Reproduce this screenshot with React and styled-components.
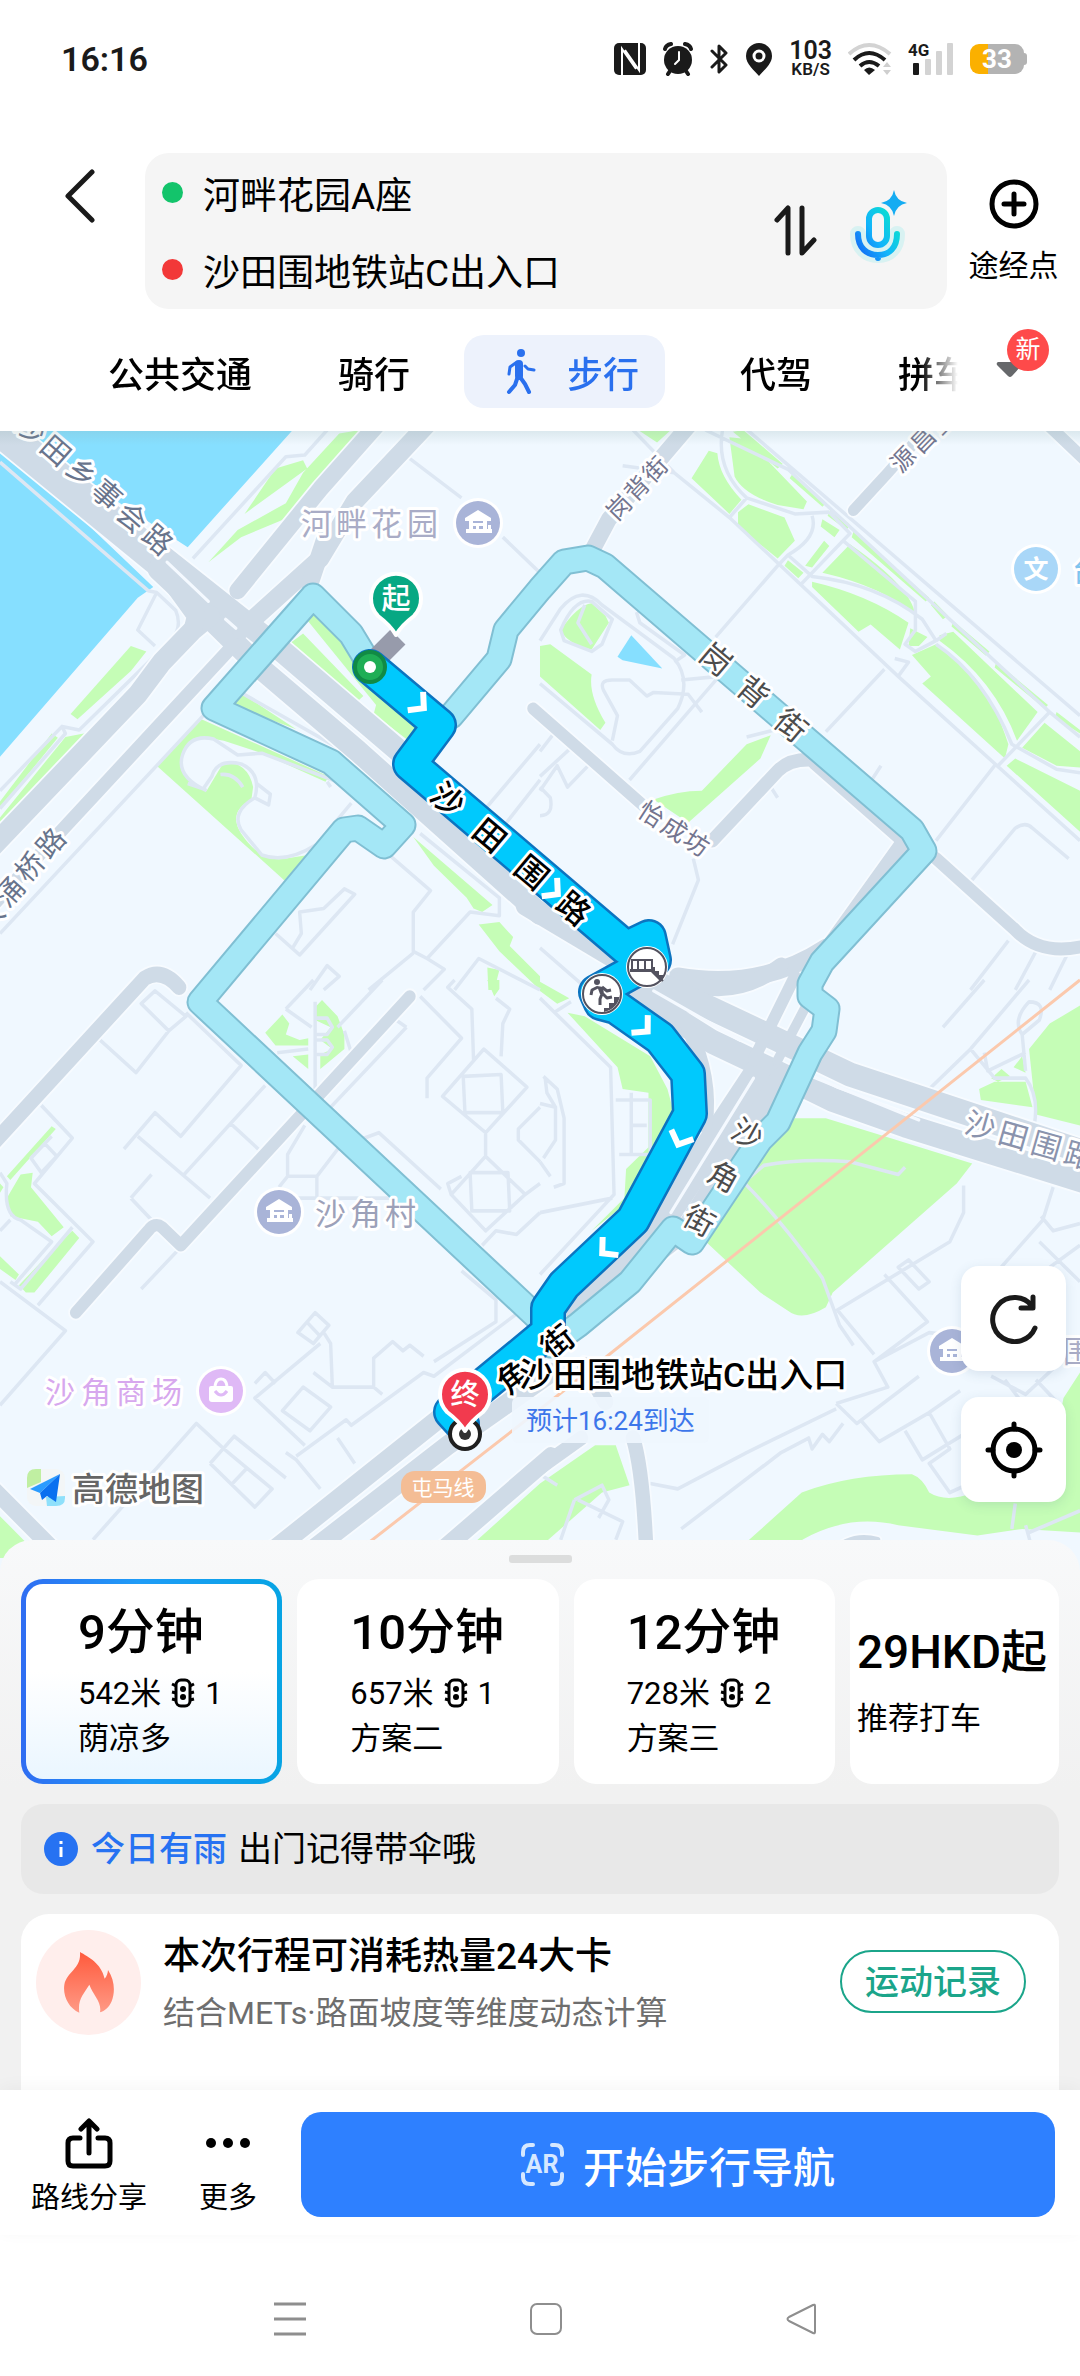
import React, { useState } from 'react';
import styled, { createGlobalStyle, css } from 'styled-components';

const GlobalStyle = createGlobalStyle`
  * {
    box-sizing: border-box;
  }

  body {
    margin: 0;
    background: #fff;
    color: #000;
    font-family: Roboto, "Noto Sans CJK SC", sans-serif;
  }

  button, input {
    margin: 0;
    padding: 0;
    border: 0;
    background: none;
    color: inherit;
    font: inherit;
  }
`

const Page = styled.div`
  display: flex;
  flex-direction: column;
  min-height: 100vh;
  overflow: hidden;
`

/* ---------- status bar ---------- */

const StatusBar = styled.div`
  display: flex;
  align-items: center;
  justify-content: space-between;
  height: 118px;
  padding: 0 53px 0 61px;
  color: #1a1a1a;
`

const Clock = styled.time`
  font-size: 34px;
  font-weight: 600;
`

const StatusIcons = styled.div`
  display: flex;
  align-items: center;
  gap: 16px;

  svg {
    display: block;
  }
`

const Speed = styled.div`
  font-size: 17px;
  font-weight: 600;
  line-height: 16px;
  text-align: center;

  strong {
    display: block;
    font-size: 25px;
    font-weight: 600;
    line-height: 20px;
  }
`

const Battery = styled.div`
  display: flex;
  align-items: center;

  span {
    width: 54px;
    border-radius: 9px;
    background: linear-gradient(90deg, #fbb000 34%, #b3b3b3 34%);
    color: #fff;
    font-size: 26px;
    font-weight: 700;
    line-height: 30px;
    text-align: center;
  }

  &::after {
    content: "";
    width: 3px;
    height: 12px;
    border-radius: 0 3px 3px 0;
    background: #b3b3b3;
  }
`

/* ---------- search header ---------- */

const SearchRow = styled.header`
  display: flex;
  align-items: center;
  padding-top: 35px;
`

const BackButton = styled.button`
  align-self: flex-start;
  width: 145px;
  padding: 16px 0 0 64px;
  text-align: left;
`

const Places = styled.div`
  display: flex;
  align-items: center;
  flex: 1;
  min-width: 0;
  height: 156px;
  padding: 0 40px 0 17px;
  border-radius: 24px;
  background: #f5f5f5;
`

const Fields = styled.div`
  display: flex;
  flex-direction: column;
  flex: 1;
  gap: 29px;
  min-width: 0;
`

const Field = styled.label`
  display: flex;
  align-items: center;
  gap: 20px;

  &::before {
    content: "";
    flex: none;
    width: 21px;
    height: 21px;
    border-radius: 50%;
    background: ${props => props.$color};
  }

  input {
    flex: 1;
    min-width: 0;
    height: 48px;
    outline: none;
    font-size: 37px;
  }
`

const IconButton = styled.button`
  margin-left: ${props => props.$gap || 0}px;

  svg {
    display: block;
  }
`

const AddStop = styled.button`
  display: flex;
  flex-direction: column;
  align-items: center;
  width: 133px;
  gap: 15px;
  padding-top: 4px;
  font-size: 30px;
  line-height: 44px;
`

/* ---------- travel modes ---------- */

const ModeRow = styled.nav`
  display: flex;
  align-items: center;
  height: 122px;
  padding-top: 3px;
`

const Modes = styled.div`
  display: flex;
  align-items: center;
  flex: 1;
  min-width: 0;
  padding-left: 65px;
  overflow: hidden;
  mask-image: linear-gradient(90deg, #000 96%, transparent);
`

const Mode = styled.button`
  flex: none;
  display: flex;
  align-items: center;
  gap: 30px;
  height: 73px;
  padding: 0 43px;
  font-size: 36px;
  font-weight: 500;

  ${props => props.$active && css`
    margin: 0 32px 0 11px;
    padding: 0 26px 0 42px;
    border-radius: 20px;
    background: #edf2fc;
    color: #2a70ee;
  `}
`

const MoreModes = styled.button`
  position: relative;
  width: 122px;
  height: 73px;
  padding-left: 38px;
  text-align: left;
`

const NewBadge = styled.span`
  position: absolute;
  top: -6px;
  left: 49px;
  width: 42px;
  border-radius: 50%;
  background: #fe4a4a;
  color: #fff;
  font-size: 25px;
  line-height: 42px;
  text-align: center;
`

/* ---------- map ---------- */

const MapArea = styled.main`
  position: relative;

  > svg {
    display: block;
    width: 100%;
    height: auto;
  }
`

const MapTools = styled.div`
  position: absolute;
  right: 14px;
  bottom: 69px;
  display: flex;
  flex-direction: column;
  gap: 26px;
`

const MapTool = styled.button`
  display: grid;
  place-items: center;
  width: 105px;
  height: 105px;
  border-radius: 18px;
  background: #fff;
  box-shadow: 0 3px 12px rgba(60, 90, 130, .14);
`

const MapText = styled.text`
  font-size: ${props => props.$size}px;
  font-weight: ${props => props.$weight || 400};
  fill: ${props => props.$color};
  stroke: ${props => (props.$plain ? 'none' : '#fff')};
  stroke-width: 6px;
  stroke-linejoin: round;
  paint-order: stroke;
`

/* ---------- bottom sheet ---------- */

const Sheet = styled.section`
  position: relative;
  display: flex;
  flex-direction: column;
  flex: 1;
  margin-top: -31px;
  padding: 15px 21px 0;
  border-radius: 32px 32px 0 0;
  background: linear-gradient(#f8f9fa, #f1f1f1 45%);
`

const Handle = styled.div`
  align-self: center;
  width: 63px;
  height: 8px;
  border-radius: 3px;
  background: #dcdddd;
`

const Plans = styled.div`
  display: grid;
  grid-template-columns: 5fr 5fr 5fr 4fr;
  gap: 15px;
  margin-top: 16px;
`

const Plan = styled.button`
  display: flex;
  flex-direction: column;
  justify-content: center;
  min-width: 0;
  height: 205px;
  padding-left: ${props => (props.$taxi ? 2 : 48)}px;
  border: 5px solid transparent;
  border-radius: 22px;
  background: #fff;
  font-size: 31px;
  line-height: 45px;
  text-align: left;
  white-space: nowrap;

  strong {
    margin-bottom: ${props => (props.$taxi ? 14 : 8)}px;
    font-size: ${props => (props.$taxi ? 46 : 49)}px;
    font-weight: 500;
    line-height: 60px;
  }

  ${props => props.$active && css`
    padding-left: 52px;
    background:
      linear-gradient(#fff 45%, #eaf6ff) padding-box,
      linear-gradient(90deg, #2f6df2, #1f9cf7 45%, #07a4e4) border-box;
  `}
`

const PlanMeta = styled.span`
  display: flex;
  align-items: center;
  gap: 10px;
`

const Notice = styled.p`
  display: flex;
  align-items: center;
  margin: 20px 0;
  min-height: 90px;
  padding: 0 23px;
  border-radius: 22px;
  background: #e8e8e8;
  font-size: 34px;
  line-height: 48px;

  b {
    margin: 0 11px 0 13px;
    color: #2672f2;
    font-weight: 500;
  }
`

const Calories = styled.article`
  display: flex;
  align-items: flex-start;
  flex: 1;
  min-height: 176px;
  padding: 16px 33px 0 15px;
  border-radius: 28px 28px 0 0;
  background: #fff;
`

const FlameBadge = styled.div`
  display: grid;
  place-items: center;
  flex: none;
  width: 105px;
  height: 105px;
  border-radius: 50%;
  background: #ffeeec;
`

const CaloriesText = styled.div`
  flex: 1;
  min-width: 0;
  padding-left: 22px;

  h2 {
    margin: 0;
    font-size: 37px;
    font-weight: 500;
    line-height: 54px;
  }

  p {
    margin: 5px 0 0;
    color: #6e6e6e;
    font-size: 32px;
    line-height: 48px;
  }
`

const RecordButton = styled.button`
  height: 63px;
  margin-top: 20px;
  padding: 0 23px;
  border: 2px solid #1ba58a;
  border-radius: 32px;
  color: #1ba58a;
  font-size: 34px;
  font-weight: 500;
  line-height: 56px;
`

/* ---------- bottom bars ---------- */

const ActionBar = styled.footer`
  position: relative;
  display: flex;
  align-items: flex-start;
  padding: 22px 25px 16px 31px;
  background: #fff;
  box-shadow: 0 -3px 16px rgba(0, 0, 0, .04);
`

const Action = styled.button`
  display: flex;
  flex-direction: column;
  align-items: center;
  gap: 7px;
  margin-right: ${props => props.$gap}px;
  padding-top: 6px;
  font-size: 29px;
  line-height: 42px;
`

const StartButton = styled.button`
  display: flex;
  align-items: center;
  justify-content: center;
  flex: 1;
  gap: 19px;
  height: 105px;
  border-radius: 20px;
  background: #2e80ff;
  color: #fff;
  font-size: 42px;
  font-weight: 500;
`

const SystemNav = styled.div`
  display: flex;
  justify-content: space-between;
  padding: 66px 260px 39px 272px;
  background: #fff;

  svg {
    display: block;
  }
`

// The base map is cut in four tiles, each one drawn on a 1568 x 1568 grid
const TILES = [
  {
    transform: 'translate(0 430) scale(.3444 .3571)',
    water: 'M20 0H850L545 328ZM0 30L445 440L400 470L0 915Z',
    green: [
      'M710 235L800 108L880 85L892 108Z',
      'M605 370L690 280L830 205L880 120L985 10L1045 0L870 200L825 250L700 300Z',
      'M205 795L380 605L425 620L380 675L225 810Z',
      'M0 1040L150 850L168 862L0 1060Z',
      'M0 1130V1085L190 860L270 845L375 732L340 790L200 920Z',
      'M890 530L915 512L980 565L1060 700L1215 830L1180 865L1085 795L1092 770Z',
      'M845 595L880 570L1055 745L1040 758Z',
      'M670 770L705 740L860 838Z',
      'M585 810L955 970L945 985L760 905L650 870Q560 850 530 900Q500 970 600 1010L650 930Q720 930 735 1000L730 1035Q660 1070 700 1130Q760 1215 830 1200L895 1190L830 1265L455 940Z',
      'M1200 1140L1375 1285L1430 1330L1400 1350L1375 1340L1355 1310L1260 1220Z',
      'M1390 1385L1450 1378L1490 1420L1480 1445L1568 1530V1568L1450 1460Z',
      'M1415 1505L1450 1512L1435 1568H1418Z',
    ],
    thin: [
      'M1190 80L1340 190M1460 300L1568 400',
      'M560 360L830 75L885 70L950 0',
      'M0 1410L600 790',
      'M0 90L430 450L455 455L510 505Q530 550 500 585L230 840L180 830L0 1010M455 455L400 560L450 605M180 830L190 850L0 1060',
      'M600 1010Q510 970 530 910Q550 850 620 865L690 910L760 905L1020 1000L1200 1110M1020 1045L920 1160Q830 1215 760 1190L700 1120Q670 1070 740 1030Q760 960 700 935Q630 920 615 970L590 1005L545 990M740 1030L780 1050L785 1020L745 990M640 965Q680 960 705 1000',
      'M950 985L960 1000M690 730L1000 900',
      'M1130 1190L1250 1290L1200 1350V1460L1240 1480L1365 1350L1450 1360V1310L1220 1130',
      'M800 1410L870 1470L1030 1300L1000 1285L940 1340L870 1350L875 1410L850 1450',
      'M900 1568L950 1500L985 1530L940 1568M1070 1568L1200 1465M1240 1480L1290 1510L1230 1568M1320 1568L1390 1480L1568 1568',
      'M1568 880L1410 1060M1568 980L1470 1100',
    ],
    roads: [
      ['M-20 -15L500 395', 92],
      ['M480 360L820 620L1160 900L1250 1010', 64],
      ['M460 390L560 480L760 670L1040 900L1568 1355', 62],
      ['M1100 -20L930 165L690 450', 48],
      ['M1245 -20L1030 200L930 360L700 560', 52],
      ['M945 300L900 430', 50],
      ['M610 520L560 560L470 650L400 740L-20 1165', 58],
      ['M510 440L570 520L560 560', 54],
      ['M680 600L190 1110L-20 1330', 38],
    ],
    white: ['M485 370L605 480M655 530L685 555'],
  },
  {
    transform: 'translate(540 430) scale(.3444 .3571)',
    water: 'M225 635L265 575L355 668L240 645Z',
    green: [
      'M285 0H380L340 35Z', 'M440 135L490 58L515 65Q520 130 585 195L550 235Z',
      'M550 20L600 25L775 200L765 222L690 210Q590 180 565 130Z',
      'M590 0L705 95L690 108L560 5Z', 'M575 230L605 208L710 245L740 310L690 360L575 270Z',
      'M735 120L830 205L820 215L725 135Z', 'M845 220L900 265L890 280L835 240Z',
      'M820 250L870 280L855 300L815 270Z', 'M825 310L840 325L790 385L770 380Z',
      'M720 365L765 400L750 415L710 380Z', 'M820 400L900 320Q1080 440 1090 520Q1000 440 820 400Z',
      'M910 285L1130 470L1120 480L905 300Z', 'M790 425Q950 460 1070 540L1045 615L960 545L925 565L790 440Z',
      'M1075 555L1125 580L1100 605H1070Z', 'M1145 480L1185 520L1170 530L1135 490Z',
      'M1200 535L1305 620L1295 632L1195 550Z', 'M1160 575L1200 565L1445 790L1385 870Q1320 700 1160 590Z',
      'M1080 630L1150 600L1260 690Q1320 760 1360 880L1350 920L1110 710L1135 690Z',
      'M1325 650L1475 770L1465 780L1320 665Z', 'M1400 890L1465 820L1568 900V945L1500 940Z',
      'M1355 940L1380 920L1568 1010V1125Z', 'M1500 790L1568 840V850L1495 805Z',
      'M0 605L30 600L150 685Q140 740 190 820L175 840L0 690Z',
      'M60 560Q110 490 150 485L190 520L200 540L150 615Q80 600 60 560Z',
      'M330 1035Q400 1010 470 1010L600 880L670 855L640 920L430 1100Z',
    ],
    thin: [
      'M240 100L390 120L550 245L1040 690L1568 1150M270 0L390 120M590 -10L1568 800',
      'M480 0L720 110L1480 790L1568 860',
      'M690 380L510 580M1000 670L830 845M1320 940L1150 1150',
      'M1250 1265L1380 1115Q1410 1095 1430 1115L1535 1200',
      'M530 0Q510 110 600 190L740 235L840 230M550 245L600 190M840 230L900 290L760 430',
      'M790 240Q810 300 720 350L690 380M720 350L790 410Q980 430 1110 530L1150 590M880 310L1090 480V560L1060 600L1090 620L1150 590',
      'M1150 590L1180 570M1150 600Q1290 690 1370 880L1500 950L1568 960M1480 790L1330 940M1040 690L1070 650L1030 640',
      'M0 590L60 500Q120 430 180 490L390 640Q440 700 400 780L290 900Q240 920 210 880L0 710',
      'M60 560Q100 470 150 480L210 530L180 600L150 620L70 590ZM130 490L110 540L150 600',
      'M210 870L225 800L185 730Q170 700 210 700L260 700L310 745L330 735L430 740L470 790M410 700L520 690L260 980',
      'M280 510L290 540L420 630L390 650M445 1200L460 1260L385 1440M600 860L680 840M670 1000L690 1030M990 940L950 1000',
      'M1360 1430L1250 1568M1440 1460L1380 1568M1530 1470L1480 1568',
      'M0 900L40 850M0 970L90 890M0 1010L50 940L80 1000L150 930M0 1080Q40 1080 30 1030L0 1000M0 1450L140 1568',
    ],
    roads: [
      ['M430 -10L200 250L150 340', 46],
      ['M910 225L1010 120L1120 0', 32],
      ['M1480 -10L1600 100', 34],
      ['M-20 780L310 1060', 34],
      ['M810 925Q730 915 690 955L500 1150', 38],
      ['M1150 1200L1380 1400Q1460 1480 1600 1440', 36],
      ['M800 930L1060 1150L800 1500', 46],
      ['M830 1450Q640 1570 400 1530', 50],
      ['M-40 1330L430 1600', 62],
    ],
    white: [],
  },
  {
    transform: 'translate(0 980) scale(.3444 .3635)',
    water: '',
    green: [
      'M770 145L820 95L840 120L830 150L870 165L895 160V180H800Z', 'M850 210L895 205V245Z',
      'M915 75L935 55L980 100L1000 150V190L930 245V205L965 190L930 165L960 130L915 110Z',
      'M150 402L162 410L30 550L20 540Z', 'M20 600L60 535L95 530L90 570L185 680L150 705L110 665L30 650Z',
      'M170 725L210 690L230 710L100 860H75L55 840Z', 'M0 760L55 810L45 825L0 795Z',
      'M0 560L10 570L0 585Z', 'M0 1475L120 1590H0Z', 'M1340 1580L1568 1385V1620H1340Z', 'M1415 0H1450V25L1435 45Z',
    ],
    thin: [
      'M450 30L410 65L490 140L540 100ZM490 140L395 255L290 165M540 90L700 235L525 430L450 365L360 465',
      'M120 345L210 435L100 560L270 720L110 895M130 450L165 485L120 530L90 490L150 430M0 530L20 560Q10 650 60 660L150 720L45 835',
      'M400 430L610 600M530 540L770 290M670 395L750 465M380 600L440 535M380 600L440 660M520 740L410 850',
      'M0 830L190 965L0 1170M0 690L30 660M30 830L60 850L210 680',
      'M885 400L835 480V540L810 570M835 540H920V600M920 540L985 460L1100 420L1280 575M830 600H1130',
      'M1340 800L1440 880V940L1260 1050M865 970L915 915L955 950L910 1000ZM890 940L930 980',
      'M940 970L960 1000L965 1120H1085V1040L1140 995L1170 1020L1190 1005L1230 1035M965 1120L910 1080M1085 1120L1110 1140',
      'M930 1000L740 1150L885 1280M820 1185L880 1120L960 1175L900 1240ZM740 1110L770 1080L800 1110',
      'M270 1540L570 1220L650 1290M610 1330L680 1255L830 1370M610 1330L740 1450L790 1400L650 1290M670 1390L720 1340',
      'M830 1300L860 1320L930 1400M980 1260L1030 1330M860 1310L1005 1210L1020 1225L1230 1080L1260 1090L1568 870',
      'M1285 320L1405 190L1530 295L1410 420ZM1345 265L1455 260L1460 365H1350ZM1310 590L1410 485L1525 590L1410 690ZM1365 530H1475L1480 635H1370Z',
      'M1410 420V485M1375 220L1370 80L1300 20L1320 0M1455 210L1460 120L1480 80L1440 50M1525 590L1568 560M1400 730L1440 690L1500 700L1568 640',
      'M1220 45L1340 160L1240 270V325M1180 130L940 370M1150 110L1180 130M915 300V60M830 80L905 130M920 105H950L965 130L950 150H920M920 165H950L965 185L950 205H920',
      'M1568 350L1505 410V440L1568 500M830 80L910 0M1000 140L1020 200M980 130L1110 0M805 200L895 190M1310 590L1300 560L1340 540',
    ],
    roads: [
      ['M-20 450L420 -5Q470 -35 520 20', 42],
      ['M1190 45L525 730L470 680Q450 665 430 690L220 915', 34],
      ['M740 1610L1290 1195L1600 950', 54],
      ['M850 1610L1300 1280L1600 1080', 54],
      ['M1270 1580L1600 1310', 50],
      ['M-20 1400L190 1600', 46],
    ],
    white: [],
  },
  {
    transform: 'translate(540 980) scale(.3444 .3635)',
    water: '',
    green: [
      'M80 90L130 100L320 210L370 300L390 370L230 630L150 690L245 600L250 520L315 460V310L240 300L225 240Z',
      'M0 5L85 50L50 65L0 30Z',
      'M470 710L620 460L740 380H830L1000 430L1255 505L1210 560L850 860L830 900Q760 940 720 910L640 860Z',
      'M1275 300L1320 280L1410 280L1430 350L1280 330Z', 'M1420 190L1480 120L1568 70V400L1440 370Z',
      'M1310 270L1340 245L1365 265L1330 280Z', 'M1375 240L1400 210L1410 255Z',
      'M560 1580L760 1410Q900 1360 1080 1360Q1110 1370 1130 1410Q1180 1440 1260 1410L1500 1250L1520 1150L1568 1080V1520L1400 1510L1270 1528L1040 1500Q860 1460 700 1580Z',
      'M0 1385L160 1280H220L260 1390L180 1410L0 1560Z',
    ],
    thin: [
      'M600 550L650 510Q760 490 900 500L1040 535L1060 515M590 555Q700 660 820 820L870 950L910 1005',
      'M860 910L1190 720L1230 640V565M1000 810L1125 940L970 1050M865 910L970 1030M1040 790L1100 850L1130 830L1070 770Z',
      'M1490 570L1460 660L1330 800M1455 650L1490 690L1568 670M1450 720L1568 830M1568 730L1480 790',
      'M860 1165L920 1220L1100 1090M1220 980L1130 970L970 1050L1010 1120L860 1165M930 1210L985 1270L1130 1190L1190 1290L1130 1330L1190 1410L1260 1380',
      'M1060 1240L1110 1320L1230 1250M1130 1190L1220 1130M1310 1090L1410 1140L1568 1000M1350 1100L1390 1150M1440 1100L1500 1160',
      'M320 1385L400 1400L600 1300L860 1180M410 1510L700 1300L780 1260L790 1290L820 1250L840 1270L880 1220',
      'M1380 1440L1370 1510M1250 190L1320 270L1410 270Q1450 320 1435 400M1170 130L1290 0M1250 190L1420 0M1130 300L1250 190',
      'M1400 150L1410 250M1400 150Q1370 110 1420 60Q1470 60 1450 110ZM1290 200L1300 250L1410 200',
      'M0 50L205 240L215 590L0 810M220 330H320V480H230M265 310V480M265 400H310M40 90L90 60',
      'M10 265L50 300L70 380V560L40 570M15 270L20 310L45 350L0 340M45 350V440L10 490M0 500L30 540M0 640L210 600',
      'M0 1360L50 1390M100 1430L180 1390L200 1430L170 1480M100 1430L60 1540M110 1430L240 1490L220 1540M1410 1500L1430 1568M1568 1460L1420 1520',
    ],
    roads: [
      ['M400 0Q560 60 700 -40', 44],
      ['M300 -10L680 160L900 260L1250 370L1600 480', 66],
      ['M230 10L500 170L700 260L850 330L1060 400L1600 560', 66],
      ['M640 250L360 650L100 890', 84],
      ['M700 270L430 680L200 850', 62],
      ['M740 -10L620 220', 34],
      ['M790 40L690 220', 28],
      ['M430 130Q500 270 480 400', 42],
      ['M130 1060L190 1160', 46],
      ['M270 1260Q300 1350 310 1600', 42],
      ['M-20 1355L120 1260', 40],
      ['M840 1580Q900 1520 980 1540', 16],
    ],
    white: ['M620 270L380 640', 'M1100 385L770 258', 'M580 165L330 30'],
  },
]

const ALT_ROUTES = [
  'M368 662L351 634L313 596L214 708L331 762L403 825L384 846L358 828L344 830L200 1002L540 1320',
  'M451 716L499 659L506 630L540 589L564 562L588 558L605 566L912 830L924 851L822 962L810 984V996L827 1009L824 1031L810 1053L778 1122L760 1140L692 1242L673 1229L630 1282L578 1325L550 1345',
]

const ROUTE = 'M370 667L439 725L410 764L626 948L649 937L654 960L596 992L601 1003L616 1007L660 1038L688 1074L690 1114L633 1220L564 1285L548 1308V1332L451 1412L462 1424'

const CHEVRONS = [[420, 705, 40], [554, 891, 40], [644, 1028, 43], [680, 1140, 113], [606, 1250, 139]]

// Road names: every glyph has its own centre, all share one angle
const ROAD_LABELS = [
  { text: '沙田乡事会路', from: [31, 428], to: [158, 539], angle: 41, size: 29, color: '#68748c' },
  { text: '大涌桥路', from: [-11, 916], to: [50, 842], angle: -48, size: 28, color: '#68748c' },
  { text: '岗背街', from: [619, 507], to: [655, 469], angle: -46, size: 24, color: '#73758f' },
  { text: '源昌里', from: [903, 459], to: [943, 421], angle: -46, size: 24, color: '#73758f' },
  { text: '岗背街', from: [716, 659], to: [791, 725], angle: 40, size: 31, color: '#4c4c4c' },
  { text: '怡成坊', from: [652, 814], to: [697, 843], angle: 33, size: 25, color: '#73758f' },
  { text: '沙田围路', from: [448, 799], to: [574, 908], angle: 40, size: 32, color: '#000', weight: 500 },
  { text: '沙田围路', from: [981, 1125], to: [1080, 1155], angle: 16, size: 30, color: '#8a93ad' },
  { text: '沙角街', from: [748, 1133], to: [700, 1220], angle: 29, size: 30, color: '#4c4c4c' },
  { text: '角街', from: [513, 1377], to: [557, 1342], angle: -38, size: 32, color: '#000', weight: 500 },
  { text: '河畔花园', from: [316, 523], to: [422, 523], angle: 0, size: 31, color: '#a9acc6' },
  { text: '沙角村', from: [330, 1213], to: [400, 1213], angle: 0, size: 31, color: '#9ca1b9' },
  { text: '沙角商场', from: [60, 1392], to: [167, 1392], angle: 0, size: 30, color: '#d7a8ee' },
  { text: '台', from: [1087, 570], to: [1087, 570], angle: 0, size: 30, color: '#7fc4ee' },
  { text: '围', from: [1078, 1351], to: [1078, 1351], angle: 0, size: 30, color: '#a9acc6' },
]

function RoadLabel({ text, from, to, angle, size, color, weight }) {
  const rad = angle * Math.PI / 180
  const dx = size / 2 * Math.cos(rad) + size * .38 * Math.sin(rad)
  const dy = size / 2 * Math.sin(rad) - size * .38 * Math.cos(rad)
  const steps = Math.max(text.length - 1, 1)
  const at = (axis, i) => from[axis] + (to[axis] - from[axis]) * i / steps
  const chars = text.split('')

  return (
    <MapText
      x={chars.map((c, i) => Math.round(at(0, i) - dx)).join(' ')}
      y={chars.map((c, i) => Math.round(at(1, i) - dy)).join(' ')}
      rotate={angle}
      $size={size}
      $color={color}
      $weight={weight}
    >
      {text}
    </MapText>
  )
}

function HousePoi({ x, y }) {
  return (
    <g transform={`translate(${x} ${y})`}>
      <circle r="25" fill="#fff" />
      <circle r="22" fill="#a9b4d8" />
      <path d="M0-13L13-5V-2H-13V-5ZM-9-2H-5V7H-9ZM5-2H9V7H5ZM-5 0H5V3H-5ZM-2 0H1V8H-2ZM10 2H13V8H10ZM-12 6H14V10H-12Z" fill="#fff" />
    </g>
  )
}

function Pin({ x, y, color, text }) {
  return (
    <g transform={`translate(${x} ${y})`}>
      <path
        d="M0 37C-4 30-10 24-18 18A25 25 0 1 1 18 18C10 24 4 30 0 37Z"
        fill={color}
        stroke="#fff"
        strokeWidth="4"
        strokeLinejoin="round"
      />
      <MapText x="0" y="11" textAnchor="middle" $size={29} $weight={500} $color="#fff" $plain>{text}</MapText>
    </g>
  )
}

function RouteMap() {
  return (
    <svg viewBox="0 431 1080 1140" role="img" aria-label="步行路线地图" preserveAspectRatio="xMidYMin slice">
      <defs>
        <linearGradient id="mapTop" x1="0" y1="0" x2="0" y2="1">
          <stop offset="0" stopColor="#8aa" stopOpacity=".2" />
          <stop offset="1" stopColor="#8aa" stopOpacity="0" />
        </linearGradient>
      </defs>
      <rect y="431" width="1080" height="1140" fill="#f0f8ff" />
      {TILES.map(t => (
        <g key={t.transform} transform={t.transform}>
          {t.water && <path d={t.water} fill="#86dfff" />}
          <path d={t.green.join('')} fill="#c5fdb6" />
        </g>
      ))}
      {TILES.map(t => (
        <path key={t.transform} transform={t.transform} d={t.thin.join('')} fill="none" stroke="#dde7f3" strokeWidth="10" strokeLinejoin="round" />
      ))}
      {TILES.map(t => (
        <g key={t.transform} transform={t.transform} fill="none" strokeLinejoin="round" strokeLinecap="round">
          {t.roads.map(([d, width]) => <path key={d} d={d} stroke="#f7fbff" strokeWidth={width + 10} />)}
        </g>
      ))}
      {TILES.map(t => (
        <g key={t.transform} transform={t.transform} fill="none" strokeLinejoin="round" strokeLinecap="round">
          {t.roads.map(([d, width]) => <path key={d} d={d} stroke="#cfdbe7" strokeWidth={width} />)}
          {t.white.map(d => <path key={d} d={d} stroke="#f4f9ff" strokeWidth="9" />)}
        </g>
      ))}

      <path d="M340 1565L557 1396L1080 980" fill="none" stroke="#fbc9ad" strokeWidth="3" />

      <g fill="none" strokeLinejoin="round" strokeLinecap="round">
        {ALT_ROUTES.map(d => <path key={d} d={d} stroke="#80bfd3" strokeWidth="27" />)}
        {ALT_ROUTES.map(d => <path key={d} d={d} stroke="#a4e7f6" strokeWidth="23" />)}
        <path d="M398 637L374 661" stroke="#979bab" strokeWidth="21" strokeLinecap="butt" />
        <path d={ROUTE} stroke="#0c74c0" strokeWidth="36" />
        <path d={ROUTE} stroke="#00c9fd" strokeWidth="31" />
      </g>
      {CHEVRONS.map(([x, y, angle]) => (
        <path
          key={x}
          transform={`translate(${x} ${y}) rotate(${angle})`}
          d="M-6-12L5 0L-6 12"
          fill="none"
          stroke="#fff"
          strokeWidth="6"
        />
      ))}

      <HousePoi x={478} y={523} />
      <HousePoi x={279} y={1212} />
      <HousePoi x={952} y={1351} />
      <g transform="translate(1036 569)">
        <circle r="25" fill="#fff" />
        <circle r="22" fill="#a9d7f8" />
        <MapText x="0" y="9" textAnchor="middle" $size={25} $weight={700} $color="#fff" $plain>文</MapText>
      </g>
      <g transform="translate(221 1391)">
        <circle r="25" fill="#fff" />
        <circle r="22" fill="#dfb9f6" />
        <path d="M-10-5H10Q12-5 12-3V8Q12 11 9 11H-9Q-12 11-12 8V-3Q-12-5-10-5Z" fill="#fff" />
        <path d="M-6-5Q-5-12 0-12T6-5" fill="none" stroke="#fff" strokeWidth="3" />
        <path d="M-6 0Q0 8 6 0" fill="none" stroke="#dfb9f6" strokeWidth="3" />
      </g>

      {ROAD_LABELS.map(label => <RoadLabel key={label.text + label.from[0]} {...label} />)}

      {/* lift and stairs on the way */}
      <g transform="translate(647 967)">
        <circle r="21" fill="#fff" />
        <circle r="19" fill="#fff" stroke="#53525f" strokeWidth="2" />
        <path d="M-15-7H5V3H-15ZM-9-7V3M-2-7V3M5 3L16 14" fill="none" stroke="#53525f" strokeWidth="2" />
        <path d="M5 0H8V4H12V8H17L14 15L4 5H-17V2H5Z" fill="#53525f" />
      </g>
      <g transform="translate(602 994)">
        <circle r="21" fill="#fff" />
        <circle r="19" fill="#fff" stroke="#53525f" strokeWidth="2" />
        <path d="M18 0A19 19 0 0 1 2 18V14H7V9H12V3H18Z" fill="#53525f" />
        <circle cx="-5" cy="-12" r="3" fill="#53525f" />
        <path d="M-5-8L1-7L2 0H-2Z" fill="#53525f" />
        <path d="M-4-7L-10-4L-11 1M0-7L5-3L9-4M0 0L-2 5V11M1 0L5 4L10 3" fill="none" stroke="#53525f" strokeWidth="3" strokeLinejoin="round" />
      </g>

      <circle cx="370" cy="667" r="15" fill="#1fae55" stroke="#118a45" strokeWidth="4" />
      <circle cx="370" cy="667" r="6" fill="#fff" />
      <Pin x={396} y={598} color="#07a883" text="起" />
      <circle cx="465" cy="1434" r="15" fill="#fff" stroke="#1f1f1f" strokeWidth="4" />
      <circle cx="465" cy="1434" r="6" fill="#333" />
      <Pin x={465} y={1394} color="#f23a4e" text="终" />

      <rect x="512" y="1397" width="197" height="46" rx="6" fill="#eef6fe" fillOpacity=".9" />
      <MapText x="519" y="1387" $size={34} $weight={500} $color="#000">沙田围地铁站C出入口</MapText>
      <MapText x="526" y="1430" $size={26} $color="#3d76ea" $plain>预计16:24到达</MapText>

      <rect x="401" y="1471" width="85" height="32" rx="14" fill="#f4bd95" />
      <MapText x="443" y="1495" textAnchor="middle" $size={21} $color="#fff" $plain>屯马线</MapText>

      <rect x="27" y="1469" width="38" height="37" rx="9" fill="#f3f6f7" />
      <path d="M27 1488V1478Q27 1469 36 1469H41V1482Z" fill="#c0efa2" />
      <path d="M46 1497L65 1496V1498Q65 1506 56 1506H47Z" fill="#8fe0fb" />
      <path d="M60 1474L30 1489L40 1493Z" fill="#2b9cff" />
      <path d="M60 1474L40 1493L42 1500L47 1496L56 1502Z" fill="#0a70f0" />
      <MapText x="72" y="1501" $size={33} $weight={500} $color="#666">高德地图</MapText>

      <rect y="431" width="1080" height="14" fill="url(#mapTop)" />
    </svg>
  )
}

const LightIcon = () => (
  <svg width="24" height="30" viewBox="0 0 24 30" fill="none" stroke="#000" strokeWidth="3">
    <rect x="5" y="2" width="14" height="26" rx="5" />
    <path d="M1 6L5 8M1 14L5 15M1 21L5 22M23 6L19 8M23 14L19 15M23 21L19 22" />
    <circle cx="12" cy="11" r="3" fill="#000" stroke="none" />
    <circle cx="12" cy="19" r="3" fill="#000" stroke="none" />
  </svg>
)

const MODES = ['公共交通', '骑行', '步行', '代驾', '拼车']

const PLANS = [
  { time: '9分钟', distance: '542米', lights: 1, name: '荫凉多' },
  { time: '10分钟', distance: '657米', lights: 1, name: '方案二' },
  { time: '12分钟', distance: '728米', lights: 2, name: '方案三' },
]

function Status() {
  return (
    <StatusBar>
      <Clock>16:16</Clock>
      <StatusIcons>
        <svg width="32" height="32" viewBox="0 0 32 32">
          <rect width="32" height="32" rx="5" fill="#1a1a1a" />
          <path d="M8 32V6L22 26M25 0V27L11 7" fill="none" stroke="#fff" strokeWidth="2" />
        </svg>
        <svg width="32" height="34" viewBox="0 0 32 34" fill="none" stroke="#1a1a1a" strokeWidth="4" strokeLinecap="round">
          <path d="M3 7Q4 3 9 2M29 7Q28 3 23 2M8 29L6 32M24 29L26 32" />
          <circle cx="16" cy="18" r="14" fill="#1a1a1a" stroke="none" />
          <path d="M17 10V18L13 22" stroke="#fff" strokeWidth="2" />
        </svg>
        <svg width="19" height="32" viewBox="0 0 19 32" fill="none" stroke="#1a1a1a" strokeWidth="3">
          <path d="M2 8L16 22L9 29V3L16 10L2 24" strokeLinejoin="round" strokeLinecap="round" />
        </svg>
        <svg width="28" height="34" viewBox="0 0 28 34">
          <path d="M14 1A13 13 0 0 1 27 14C27 22 19 28 14 34C9 28 1 22 1 14A13 13 0 0 1 14 1Z" fill="#1a1a1a" />
          <circle cx="14" cy="14" r="5" fill="none" stroke="#fff" strokeWidth="3" />
        </svg>
        <Speed><strong>103</strong>KB/S</Speed>
        <svg width="44" height="34" viewBox="0 0 44 34" fill="none" strokeWidth="4">
          <path d="M1 12Q21-6 42 12" stroke="#d3d3d3" />
          <path d="M6 18Q21 4 37 18M12 24Q21 16 31 24" stroke="#1a1a1a" />
          <path d="M16 28Q21 23 27 28L21 33Z" fill="#1a1a1a" />
          <path d="M35 25L39 20L43 25ZM35 28H43L39 33Z" fill="#cfcfcf" />
        </svg>
        <svg width="46" height="34" viewBox="0 0 46 34">
          <rect x="5" y="21" width="6" height="12" rx="1" fill="#1a1a1a" />
          <rect x="17" y="17" width="6" height="16" rx="1" fill="#d3d3d3" />
          <rect x="28" y="9" width="6" height="24" rx="1" fill="#d3d3d3" />
          <rect x="39" y="1" width="6" height="32" rx="1" fill="#d3d3d3" />
          <text x="0" y="14" fontSize="17" fontWeight="700" fill="#1a1a1a">4G</text>
        </svg>
        <Battery><span>33</span></Battery>
      </StatusIcons>
    </StatusBar>
  )
}

function Header({ mode, onMode }) {
  return (
    <>
      <SearchRow>
        <BackButton aria-label="返回">
          <svg width="31" height="54" viewBox="0 0 31 54" fill="none" stroke="#1a1a1a" strokeWidth="5" strokeLinecap="round" strokeLinejoin="round">
            <path d="M28 3L4 27L28 51" />
          </svg>
        </BackButton>
        <Places>
          <Fields>
            <Field $color="#13c46b"><input aria-label="起点" defaultValue="河畔花园A座" /></Field>
            <Field $color="#f23838"><input aria-label="终点" defaultValue="沙田围地铁站C出入口" /></Field>
          </Fields>
          <IconButton aria-label="交换起终点">
            <svg width="43" height="52" viewBox="0 0 43 52" fill="none" stroke="#1a1a1a" strokeWidth="5" strokeLinecap="round" strokeLinejoin="round">
              <path d="M3 15L14 3V48M28 3V48L40 35" />
            </svg>
          </IconButton>
          <IconButton aria-label="语音输入" $gap={38}>
            <svg width="52" height="84" viewBox="0 -1 52 84" fill="none" overflow="visible">
              <defs>
                <linearGradient id="mic" gradientUnits="userSpaceOnUse" x1="4" y1="60" x2="44" y2="34">
                  <stop offset="0" stopColor="#1272f5" />
                  <stop offset=".45" stopColor="#12b4fb" />
                  <stop offset="1" stopColor="#0be0cf" />
                </linearGradient>
              </defs>
              <path d="M3 44C3 58 12 65 23 65S42 58 42 44" stroke="#0be0e0" strokeOpacity=".12" strokeWidth="16" strokeLinecap="round" />
              <g stroke="url(#mic)" strokeWidth="6" strokeLinecap="round">
                <rect x="14" y="20" width="18" height="35" rx="9" />
                <path d="M3 44C3 58 12 65 23 65S42 58 42 44M23 66V68" />
              </g>
              <path d="M39 0Q41 11 52 13Q41 15 39 26Q37 15 26 13Q37 11 39 0Z" fill="#14acf2" />
            </svg>
          </IconButton>
        </Places>
        <AddStop>
          <svg width="50" height="50" viewBox="0 0 50 50" fill="none" stroke="#000" strokeWidth="5" strokeLinecap="round">
            <circle cx="25" cy="25" r="22" />
            <path d="M25 15V35M15 25H35" />
          </svg>
          途经点
        </AddStop>
      </SearchRow>
      <ModeRow>
        <Modes>
          {MODES.map(name => (
            <Mode key={name} $active={name === mode} onClick={() => onMode(name)}>
              {name === mode && (
                <svg width="31" height="48" viewBox="0 0 31 48" fill="none" stroke="#2a70ee" strokeLinecap="round" strokeLinejoin="round">
                  <circle cx="15" cy="5" r="4" fill="#2a70ee" stroke="none" />
                  <path d="M13 16V28" strokeWidth="8" />
                  <path d="M11 14L4 19L3 26M19 18L22 21L28 22" strokeWidth="3" />
                  <path d="M11 31L9 37L3 44M14 29L19 36L23 44" strokeWidth="4" />
                </svg>
              )}
              {name}
            </Mode>
          ))}
        </Modes>
        <MoreModes aria-label="更多出行方式">
          <svg width="28" height="16" viewBox="0 0 28 16">
            <path d="M2 0H26Q28 1 26 3L16 14Q14 16 12 14L1 3Q0 1 2 0Z" fill="#66686b" />
          </svg>
          <NewBadge>新</NewBadge>
        </MoreModes>
      </ModeRow>
    </>
  )
}

export default function App() {
  const [mode, setMode] = useState('步行')
  const [plan, setPlan] = useState(0)

  return (
    <Page>
      <GlobalStyle />
      <Status />
      <Header mode={mode} onMode={setMode} />

      <MapArea>
        <RouteMap />
        <MapTools>
          <MapTool aria-label="刷新路线">
            <svg width="50" height="50" viewBox="0 0 50 50" fill="none" stroke="#1a1a1a" strokeWidth="5" strokeLinecap="round" strokeLinejoin="round">
              <path d="M46 34A22 22 0 1 1 43 12M44 3V14H32" />
            </svg>
          </MapTool>
          <MapTool aria-label="定位">
            <svg width="58" height="58" viewBox="0 0 58 58" fill="none" stroke="#000" strokeWidth="5" strokeLinecap="round">
              <circle cx="29" cy="29" r="21" />
              <circle cx="29" cy="29" r="8" fill="#000" stroke="none" />
              <path d="M29 3V8M29 50V55M3 29H8M50 29H55" />
            </svg>
          </MapTool>
        </MapTools>
      </MapArea>

      <Sheet>
        <Handle />
        <Plans>
          {PLANS.map((p, i) => (
            <Plan key={p.time} $active={i === plan} aria-pressed={i === plan} onClick={() => setPlan(i)}>
              <strong>{p.time}</strong>
              <PlanMeta>{p.distance}<LightIcon />{p.lights}</PlanMeta>
              <span>{p.name}</span>
            </Plan>
          ))}
          <Plan $taxi>
            <strong>29HKD起</strong>
            <span>推荐打车</span>
          </Plan>
        </Plans>

        <Notice>
          <svg width="34" height="34" viewBox="0 0 34 34">
            <circle cx="17" cy="17" r="17" fill="#2672f2" />
            <path d="M17 15V25M17 9V12" stroke="#fff" strokeWidth="3" />
          </svg>
          <b>今日有雨</b>出门记得带伞哦
        </Notice>

        <Calories>
          <FlameBadge>
            <svg width="50" height="61" viewBox="0 0 150 183">
              <defs>
                <linearGradient id="flame" x1="0" y1="0" x2="0" y2="1">
                  <stop offset="0" stopColor="#ff5a3c" />
                  <stop offset="1" stopColor="#ff9a86" />
                </linearGradient>
              </defs>
              <path d="M48 0C72 14 112 34 122 80C129 72 131 64 132 54C152 84 154 120 143 148C136 165 122 178 108 181C114 150 88 130 76 98C60 125 40 142 46 182C14 168-4 132 1 98C10 56 52 52 48 0Z" fill="url(#flame)" />
            </svg>
          </FlameBadge>
          <CaloriesText>
            <h2>本次行程可消耗热量24大卡</h2>
            <p>结合METs·路面坡度等维度动态计算</p>
          </CaloriesText>
          <RecordButton>运动记录</RecordButton>
        </Calories>
      </Sheet>

      <ActionBar>
        <Action $gap={52}>
          <svg width="48" height="52" viewBox="0 0 48 52" fill="none" stroke="#000" strokeWidth="5" strokeLinecap="round" strokeLinejoin="round">
            <path d="M15 20H8Q3 20 3 25V43Q3 48 8 48H40Q45 48 45 43V25Q45 20 40 20H33M24 35V4M16 11L24 3L32 11" />
          </svg>
          路线分享
        </Action>
        <Action $gap={44}>
          <svg width="44" height="52" viewBox="0 0 44 52">
            <circle cx="5" cy="25" r="5" />
            <circle cx="22" cy="25" r="5" />
            <circle cx="39" cy="25" r="5" />
          </svg>
          更多
        </Action>
        <StartButton>
          <svg width="43" height="43" viewBox="0 0 43 43" fill="none" stroke="#d6e8ff" strokeWidth="4" strokeLinecap="round">
            <path d="M2 12V9Q2 2 9 2H12M31 2H34Q41 2 41 9V12M41 31V34Q41 41 34 41H31M12 41H9Q2 41 2 34V31" />
            <text x="21" y="30" textAnchor="middle" fontSize="25" fontWeight="700" fill="#d6e8ff" stroke="none">AR</text>
          </svg>
          开始步行导航
        </StartButton>
      </ActionBar>

      <SystemNav>
        <svg width="36" height="36" viewBox="0 0 36 36" stroke="#8e8e8e" strokeWidth="3">
          <path d="M2 3H34M2 18H34M2 33H34" />
        </svg>
        <svg width="36" height="36" viewBox="0 0 36 36" fill="none" stroke="#8e8e8e" strokeWidth="2">
          <rect x="3" y="3" width="30" height="30" rx="6" />
        </svg>
        <svg width="36" height="36" viewBox="0 0 36 36" fill="none" stroke="#8e8e8e" strokeWidth="2" strokeLinejoin="round">
          <path d="M5 16L29 4Q31 3 31 5V31Q31 33 29 32L5 20Q2 18 5 16Z" />
        </svg>
      </SystemNav>
    </Page>
  )
}
